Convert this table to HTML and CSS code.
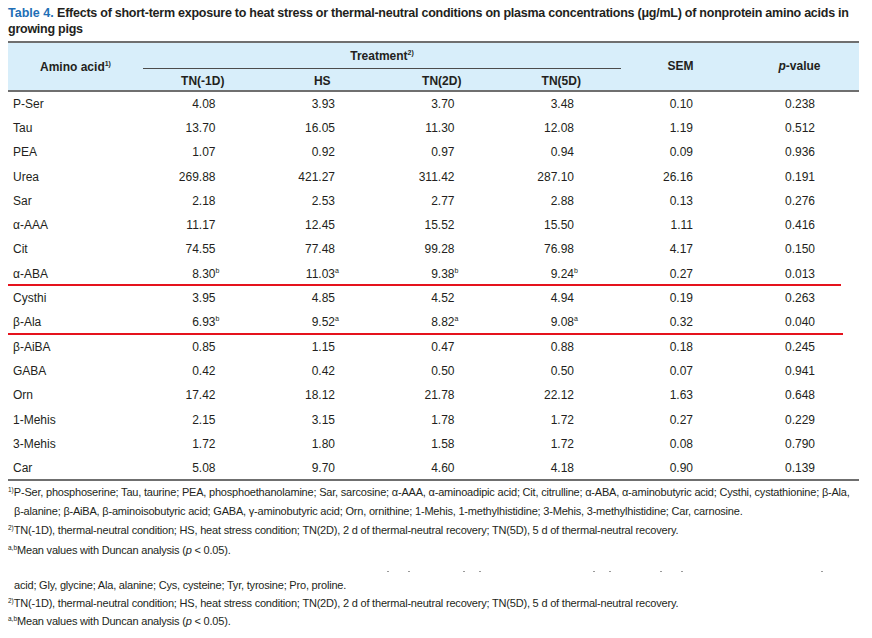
FILE: index.html
```html
<!DOCTYPE html>
<html lang="en">
<head>
<meta charset="utf-8">
<title>Table 4</title>
<link rel="stylesheet" href="styles.css">
</head>
<body>
<div class="page">
  <h1 class="title"><span class="tlabel">Table 4.</span> <span class="ttext">Effects of short-term exposure to heat stress or thermal-neutral conditions on plasma concentrations (μg/mL) of nonprotein amino acids in growing pigs</span></h1>
  <table class="data">
    <colgroup>
      <col class="c0"><col class="ct"><col class="ct"><col class="ct"><col class="ct"><col class="cs"><col class="cs">
    </colgroup>
    <thead>
      <tr class="h1">
        <th rowspan="2" class="aa">Amino acid<sup>1)</sup></th>
        <th colspan="4" class="treat">Treatment<sup>2)</sup></th>
        <th rowspan="2" class="side">SEM</th>
        <th rowspan="2" class="side"><i>p</i>-value</th>
      </tr>
      <tr class="h2">
        <th>TN(-1D)</th><th>HS</th><th>TN(2D)</th><th>TN(5D)</th>
      </tr>
    </thead>
    <tbody>
      <tr><td>P-Ser</td><td>4.08</td><td>3.93</td><td>3.70</td><td>3.48</td><td>0.10</td><td class="p">0.238</td></tr>
      <tr><td>Tau</td><td>13.70</td><td>16.05</td><td>11.30</td><td>12.08</td><td>1.19</td><td class="p">0.512</td></tr>
      <tr><td>PEA</td><td>1.07</td><td>0.92</td><td>0.97</td><td>0.94</td><td>0.09</td><td class="p">0.936</td></tr>
      <tr><td>Urea</td><td>269.88</td><td>421.27</td><td>311.42</td><td>287.10</td><td>26.16</td><td class="p">0.191</td></tr>
      <tr><td>Sar</td><td>2.18</td><td>2.53</td><td>2.77</td><td>2.88</td><td>0.13</td><td class="p">0.276</td></tr>
      <tr><td>α-AAA</td><td>11.17</td><td>12.45</td><td>15.52</td><td>15.50</td><td>1.11</td><td class="p">0.416</td></tr>
      <tr><td>Cit</td><td>74.55</td><td>77.48</td><td>99.28</td><td>76.98</td><td>4.17</td><td class="p">0.150</td></tr>
      <tr class="mark"><td class="mk1">α-ABA</td><td>8.30<sup>b</sup></td><td>11.03<sup>a</sup></td><td>9.38<sup>b</sup></td><td>9.24<sup>b</sup></td><td>0.27</td><td class="p">0.013</td></tr>
      <tr><td>Cysthi</td><td>3.95</td><td>4.85</td><td>4.52</td><td>4.94</td><td>0.19</td><td class="p">0.263</td></tr>
      <tr class="mark"><td class="mk2">β-Ala</td><td>6.93<sup>b</sup></td><td>9.52<sup>a</sup></td><td>8.82<sup>a</sup></td><td>9.08<sup>a</sup></td><td>0.32</td><td class="p">0.040</td></tr>
      <tr><td>β-AiBA</td><td>0.85</td><td>1.15</td><td>0.47</td><td>0.88</td><td>0.18</td><td class="p">0.245</td></tr>
      <tr><td>GABA</td><td>0.42</td><td>0.42</td><td>0.50</td><td>0.50</td><td>0.07</td><td class="p">0.941</td></tr>
      <tr><td>Orn</td><td>17.42</td><td>18.12</td><td>21.78</td><td>22.12</td><td>1.63</td><td class="p">0.648</td></tr>
      <tr><td>1-Mehis</td><td>2.15</td><td>3.15</td><td>1.78</td><td>1.72</td><td>0.27</td><td class="p">0.229</td></tr>
      <tr><td>3-Mehis</td><td>1.72</td><td>1.80</td><td>1.58</td><td>1.72</td><td>0.08</td><td class="p">0.790</td></tr>
      <tr><td>Car</td><td>5.08</td><td>9.70</td><td>4.60</td><td>4.18</td><td>0.90</td><td class="p">0.139</td></tr>
    </tbody>
  </table>
  <div class="notes">
    <p class="note"><sup>1)</sup>P-Ser, phosphoserine; Tau, taurine; PEA, phosphoethanolamine; Sar, sarcosine; α-AAA, α-aminoadipic acid; Cit, citrulline; α-ABA, α-aminobutyric acid; Cysthi, cystathionine; β-Ala, β-alanine; β-AiBA, β-aminoisobutyric acid; GABA, γ-aminobutyric acid; Orn, ornithine; 1-Mehis, 1-methylhistidine; 3-Mehis, 3-methylhistidine; Car, carnosine.</p>
    <p class="note"><sup>2)</sup>TN(-1D), thermal-neutral condition; HS, heat stress condition; TN(2D), 2 d of thermal-neutral recovery; TN(5D), 5 d of thermal-neutral recovery.</p>
    <p class="note"><sup>a,b</sup>Mean values with Duncan analysis (<i>p</i> &lt; 0.05).</p>
  </div>
  <div class="specks"><span></span><span></span><span></span><span></span><span></span><span></span><span></span><span></span><span></span></div>
  <div class="notes2">
    <p class="cont">acid; Gly, glycine; Ala, alanine; Cys, cysteine; Tyr, tyrosine; Pro, proline.</p>
    <p class="note"><sup>2)</sup>TN(-1D), thermal-neutral condition; HS, heat stress condition; TN(2D), 2 d of thermal-neutral recovery; TN(5D), 5 d of thermal-neutral recovery.</p>
    <p class="note"><sup>a,b</sup>Mean values with Duncan analysis (<i>p</i> &lt; 0.05).</p>
  </div>
</div>
</body>
</html>
```
FILE: styles.css
```css
* { box-sizing: border-box; }
html, body { margin: 0; padding: 0; background: #ffffff; }
body {
  font-family: "Liberation Sans", Arial, sans-serif;
  color: #231f20;
}
.page {
  width: 872px;
  padding: 5px 13px 0 8px;
}
.title {
  margin: 0 0 4px;
  font-size: 12.5px;
  line-height: 16px;
  font-weight: bold;
  color: #231f20;
}
.tlabel { color: #1f6fb6; }
.ttext { letter-spacing: -0.25px; }

.data {
  width: 851px;
  table-layout: fixed;
  border-collapse: collapse;
  font-size: 12px;
}
.c0 { width: 135px; }
.ct { width: 119.5px; }
.cs { width: 119px; }

.data thead {
  border-top: 2px solid #6f6f6f;
  border-bottom: 2px solid #6f6f6f;
}
.data th {
  background: #d8eefa;
  font-weight: bold;
  padding: 0;
  text-align: center;
  vertical-align: middle;
}
.data th sup, .data td sup {
  font-size: 7px;
  line-height: 0;
  vertical-align: 5px;
}
.h1 th { height: 26px; }
.h2 th { height: 23px; padding-top: 4px; }
.data th.treat {
  border-bottom: 1px solid #4c4c4c;
  padding-top: 1px;
}
.data th.aa { padding-top: 1px; }
.data th.side { padding-bottom: 1px; }

.data tbody { border-bottom: 2px solid #6f6f6f; }
.data td {
  height: 24.3px;
  padding: 1px 47px 0 0;
  text-align: right;
  vertical-align: middle;
  white-space: nowrap;
}
.data td:first-child {
  text-align: left;
  padding: 1px 0 0 5px;
}
.data td.p { padding-right: 44px; }
.data td sup {
  display: inline-block;
  width: 0;
  overflow: visible;
  text-align: left;
}

.data td.mk1, .data td.mk2 { position: relative; }
.data td.mk1::after, .data td.mk2::after {
  content: "";
  position: absolute;
  left: 0;
  bottom: -1px;
  height: 2px;
  background: #e5131d;
}
.data td.mk1::after { width: 833px; }
.data td.mk2::after { width: 835px; }

.notes { padding-top: 2px; }
.note, .cont {
  margin: 0;
  font-size: 11px;
  line-height: 19.3px;
  letter-spacing: -0.2px;
  padding-left: 6px;
  text-indent: -6px;
}
.note sup {
  font-size: 6.5px;
  line-height: 0;
  vertical-align: 4px;
  letter-spacing: 0;
}
.specks {
  display: flex;
  height: 2px;
  margin-top: 11px;
}
.specks span {
  width: 2px;
  height: 1px;
  background: #9a9a9a;
  flex: none;
}
.specks span:nth-child(1) { margin-left: 379px; }
.specks span:nth-child(2) { margin-left: 19px; }
.specks span:nth-child(3) { margin-left: 53px; }
.specks span:nth-child(4) { margin-left: 14px; }
.specks span:nth-child(5) { margin-left: 112px; }
.specks span:nth-child(6) { margin-left: 14px; }
.specks span:nth-child(7) { margin-left: 49px; }
.specks span:nth-child(8) { margin-left: 19px; }
.specks span:nth-child(9) { margin-left: 138px; }

.notes2 { padding-top: 3px; }
.notes2 .note, .notes2 .cont { line-height: 18px; }
.notes2 .cont { padding-left: 6px; text-indent: 0; }
```
